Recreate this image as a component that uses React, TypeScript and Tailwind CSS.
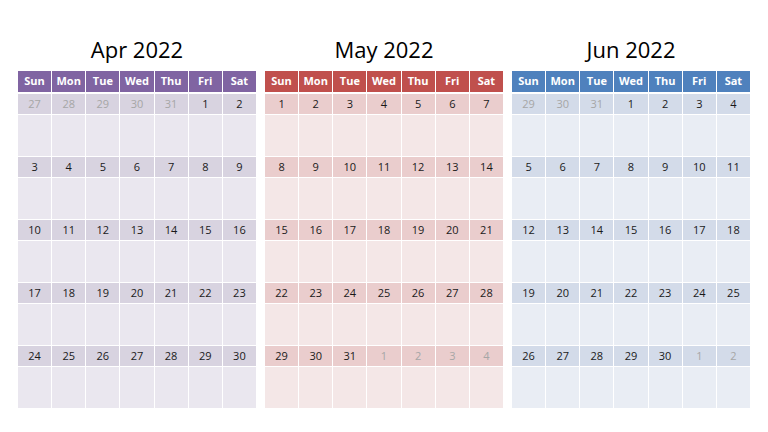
import React from "react";

type Theme = { head: string; date: string; blank: string };

const themes: Record<string, Theme> = {
  purple: { head: "bg-[#8064A2]", date: "bg-[#D8D3E0]", blank: "bg-[#EAE7EF]" },
  red: { head: "bg-[#C0504D]", date: "bg-[#EACDCD]", blank: "bg-[#F4E7E7]" },
  blue: { head: "bg-[#4F81BD]", date: "bg-[#D3DBE9]", blank: "bg-[#E9EDF4]" },
};

const days = ["Sun", "Mon", "Tue", "Wed", "Thu", "Fri", "Sat"];

type Day = { n: number; out: boolean };

function build(startOffset: number, prevLen: number, len: number): Day[][] {
  const cells: Day[] = [];
  for (let i = startOffset; i > 0; i--) cells.push({ n: prevLen - i + 1, out: true });
  for (let d = 1; d <= len; d++) cells.push({ n: d, out: false });
  let k = 1;
  while (cells.length < 35) cells.push({ n: k++, out: true });
  const weeks: Day[][] = [];
  for (let w = 0; w < 5; w++) weeks.push(cells.slice(w * 7, w * 7 + 7));
  return weeks;
}

const months = [
  { title: "Apr 2022", theme: themes.purple, weeks: build(5, 31, 30) },
  { title: "May 2022", theme: themes.red, weeks: build(0, 30, 31) },
  { title: "Jun 2022", theme: themes.blue, weeks: build(3, 31, 30) },
];

function Month({ title, theme, weeks }: { title: string; theme: Theme; weeks: Day[][] }) {
  return (
    <div className="w-[238px] flex flex-col">
      <div className="h-[71px] pt-[26px] flex items-center justify-center text-[22px] text-black leading-none">
        {title}
      </div>
      <div className="grid grid-cols-7 gap-x-px h-[21px]">
        {days.map((d) => (
          <div
            key={d}
            className={`${theme.head} flex items-center justify-center text-white font-bold text-[11px]`}
          >
            {d}
          </div>
        ))}
      </div>
      <div className="mt-[2px] flex flex-col gap-px">
        {weeks.map((w, wi) => (
          <React.Fragment key={wi}>
            <div className="grid grid-cols-7 gap-x-px h-[20px]">
              {w.map((d, i) => (
                <div
                  key={i}
                  className={`${theme.date} flex items-center justify-center text-[11px] ${
                    d.out ? "text-[#A6A6A6]" : "text-[#1a1a1a]"
                  }`}
                >
                  {d.n}
                </div>
              ))}
            </div>
            <div className="grid grid-cols-7 gap-x-px h-[41px]">
              {w.map((_, i) => (
                <div key={i} className={theme.blank} />
              ))}
            </div>
          </React.Fragment>
        ))}
      </div>
    </div>
  );
}

export default function App() {
  return (
    <div
      className="w-[768px] h-[432px] bg-white flex px-[18px] gap-[9px] overflow-hidden"
      style={{ fontFamily: '"Open Sans", "Noto Sans", sans-serif' }}
    >
      {months.map((m) => (
        <Month key={m.title} {...m} />
      ))}
    </div>
  );
}
